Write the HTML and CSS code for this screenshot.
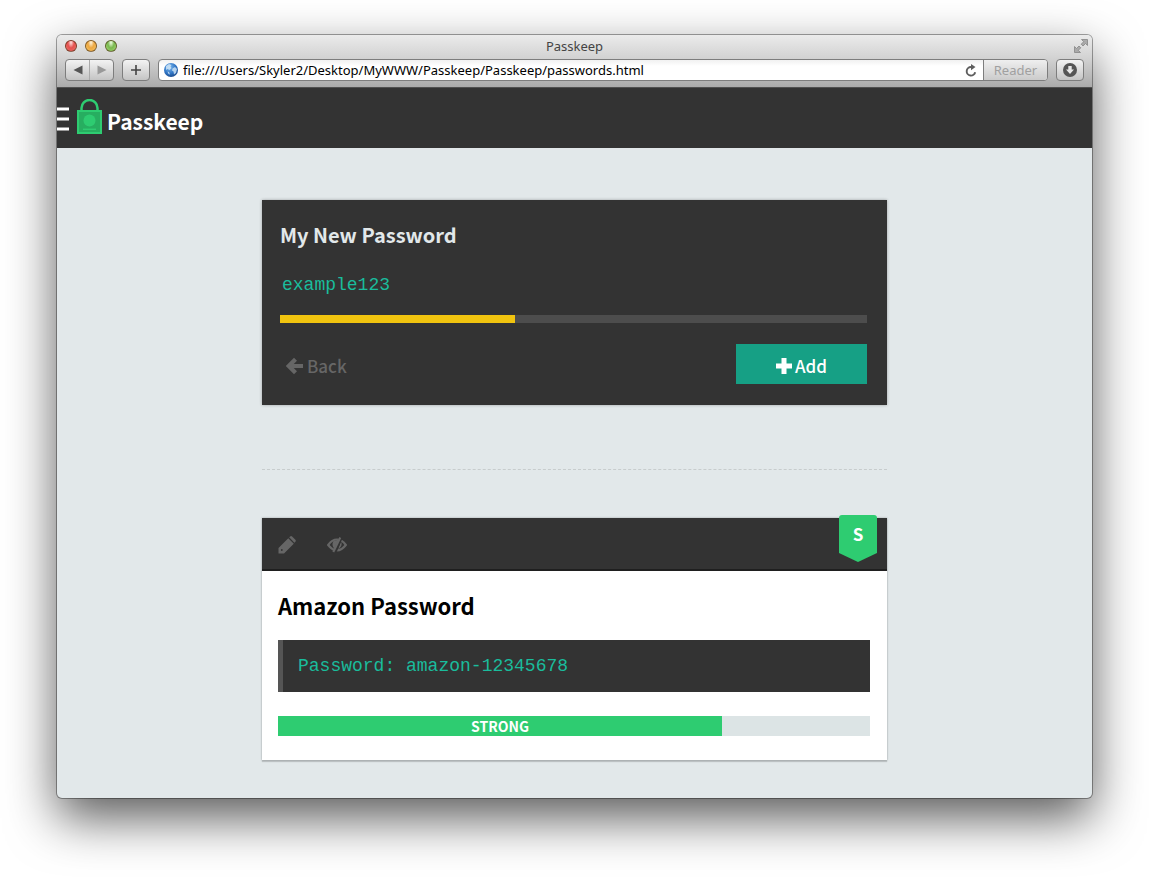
FILE: index.html
```html
<!DOCTYPE html>
<html lang="en">
<head>
<meta charset="utf-8">
<title>Passkeep</title>
<link rel="stylesheet" href="styles.css">
</head>
<body>
<div class="window">
  <div class="chrome">
    <div class="titlebar">
      <div class="lights"><span class="light red"></span><span class="light amber"></span><span class="light green"></span></div>
      <span class="window-title">Passkeep</span>
      <svg class="expand" width="14" height="14" viewBox="0 0 14 14"><path d="M7.500.5h6v6l-2-2-2.500 2.500-1.800-1.800 2.500-2.500zM.5 7.500l2 2L5 7l1.800 1.800-2.500 2.500 2.200 2.200h-6z" fill="#aaa" stroke="#858585" stroke-width=".8"/></svg>
    </div>
    <div class="toolbar">
      <div class="group">
        <button class="seg" aria-label="Previous"><svg width="10" height="10" viewBox="0 0 10 10"><path d="M9.500.5v9L.5 5z" fill="#555"/></svg></button>
        <button class="seg" aria-label="Next"><svg width="10" height="10" viewBox="0 0 10 10"><path d="M.5.5v9L9.500 5z" fill="#999"/></svg></button>
      </div>
      <button class="tool" aria-label="New tab"><svg width="12" height="12" viewBox="0 0 12 12"><path d="M6 1v10M1 6h10" stroke="#444" stroke-width="1.600"/></svg></button>
      <div class="address">
        <svg width="14" height="14" viewBox="0 0 14 14"><defs><radialGradient id="globe" cx=".4" cy=".3" r=".75"><stop offset="0" stop-color="#7db9ee"/><stop offset=".6" stop-color="#2f74c4"/><stop offset="1" stop-color="#194687"/></radialGradient></defs><circle cx="7" cy="7" r="7" fill="url(#globe)"/><path d="M2 3l3-2 2.500 1-1 1.500L7.500 5l-2 2-2-1-1.500 1zM8.500 5.500l2.500-1.500 2 2-1 4-2 1.500-.5-3-1.500-1zM3.500 8.500l1.500.5 1 2.500-1.500-.5z" fill="#d5e8f8" opacity=".8"/></svg>
        <input class="url" type="text" aria-label="Address" value="file:///Users/Skyler2/Desktop/MyWWW/Passkeep/Passkeep/passwords.html">
        <button class="reload" aria-label="Reload"><svg width="12" height="13" viewBox="0 0 12 13"><path d="M6.500 3H6a4.300 4.300 0 1 0 4.200 5.200" fill="none" stroke="#5e5e5e" stroke-width="1.900"/><path d="M6 0v6.200L10.500 3z" fill="#5e5e5e"/></svg></button>
        <button class="reader" disabled>Reader</button>
      </div>
      <button class="tool" aria-label="Downloads"><svg width="14" height="14" viewBox="0 0 14 14"><circle cx="7" cy="7" r="7" fill="#555"/><path d="M5.300 3h3.400v3.500h2.300L7 11 3 6.500h2.300z" fill="#e8e8e8"/></svg></button>
    </div>
  </div>
  <header class="site-header">
    <button class="menu" aria-label="Menu"><svg width="12" height="26" viewBox="0 0 12 26"><path d="M0 4h12M0 14h12M0 24h12" stroke="#fff" stroke-width="3"/></svg></button>
    <a class="brand" href="#">
      <svg width="25" height="38" viewBox="0 0 25 38"><path d="M4.500 12V9a8 8 0 0 1 16 0v3" fill="none" stroke="#2ecc71" stroke-width="2.500"/><path d="M1 12h23v22H1z" fill="#27ae60" stroke="#2ecc71" stroke-width="2"/><circle cx="12.500" cy="21.500" r="6" fill="#2ecc71"/><path d="M6 30.300h13" stroke="#2ecc71" stroke-width="1.500"/></svg>
      <span>Passkeep</span>
    </a>
  </header>
  <main class="page">
    <form class="new-card">
      <h2 class="new-title"><label for="new-password">My New Password</label></h2>
      <input class="new-input" id="new-password" type="text" value="example123">
      <div class="meter"><div class="meter-fill" style="width:40%"></div></div>
      <div class="actions">
        <button class="back" type="button"><svg width="18" height="18" viewBox="0 0 18 18"><path d="M9.500 2.200L2.800 9l6.700 6.800M4 9h13" fill="none" stroke="currentColor" stroke-width="4.200"/></svg>Back</button>
        <button class="add" type="button"><svg width="16" height="16" viewBox="0 0 16 16"><path d="M8 0v16M0 8h16" stroke="#fff" stroke-width="5"/></svg>Add</button>
      </div>
    </form>
    <hr class="divider">
    <article class="entry">
      <div class="entry-bar">
        <button class="icon" aria-label="Edit"><svg width="18" height="18" viewBox="0 0 18 18"><path d="M.5 12L10.300 2.200l5.500 5.500L6 17.500H.5zM11.200 1.300l.9-.9q1-.8 2 0l3.300 3.300q.8 1 0 2l-1 1z" fill="#666"/><circle cx="3.800" cy="14" r=".9" fill="#333"/></svg></button>
        <button class="icon" aria-label="Hide password"><svg width="20" height="16" viewBox="0 0 20 16"><path d="M1.200 8Q5 2.500 10 2.500T18.800 8q-4 5.300-8.800 5.300T1.200 8z" fill="none" stroke="#666" stroke-width="2.200"/><path d="M6.500 4Q4 8 7.500 12L12.500 2.500zM14 4.500q2 4-2 7l-1 .5z" fill="#666"/><path d="M14.300.5L7.800 15.500" stroke="#333" stroke-width="3"/><path d="M13.300.5L6.300 15" stroke="#666" stroke-width="2"/></svg></button>
        <div class="badge"><span>S</span></div>
      </div>
      <div class="entry-body">
        <h2 class="entry-title">Amazon Password</h2>
        <code class="secret">Password: amazon-12345678</code>
        <div class="strength"><div class="strength-fill" style="width:75%">STRONG</div></div>
      </div>
    </article>
  </main>
</div>
</body>
</html>
```
FILE: styles.css
```css
* { box-sizing: border-box; }
body {
  margin: 0;
  min-height: 100vh;
  padding: 35px 57px 79px;
  display: flex;
  background: #fff;
  font-family: "Noto Sans CJK SC", "Noto Sans", sans-serif;
}
button, input { font: inherit; border: 0; padding: 0; margin: 0; background: none; color: inherit; }
button { display: flex; align-items: center; justify-content: center; }
svg { display: block; flex: none; }
h2 { margin: 0; }

.window {
  flex: 1;
  min-width: 0;
  display: flex;
  flex-direction: column;
  border-radius: 5px;
  background: #e2e8ea;
  box-shadow: 0 0 0 1px rgba(0, 0, 0, .35), 0 20px 50px rgba(0, 0, 0, .65);
}
.chrome {
  border-radius: 5px 5px 0 0;
  border-bottom: 1px solid #515151;
  background: linear-gradient(#ebebeb, #d2d2d2 45%, #ababab);
  font-family: "Noto Sans", sans-serif;
}
.titlebar {
  height: 24px;
  padding: 0 4px 2px 8px;
  display: grid;
  grid-template-columns: 1fr auto 1fr;
  align-items: center;
}
.lights { display: flex; gap: 8px; }
.light {
  width: 12px;
  height: 12px;
  border-radius: 50%;
  border: 1px solid rgba(60, 30, 0, .6);
}
.red { background: radial-gradient(ellipse at 50% 15%, #ffe2e2, #e5504e 45%, #e8605c 70%, #ffb0aa); }
.amber { background: radial-gradient(ellipse at 50% 15%, #fff4dd, #eda73f 45%, #f2b653 70%, #ffea9d); }
.green { background: radial-gradient(ellipse at 50% 15%, #f0ffe5, #79b84d 45%, #8fca62 70%, #d3f5a4); }
.window-title { padding-right: 4px; font-size: 13px; line-height: 22px; color: #444; }
.expand { justify-self: end; }
.toolbar { display: flex; gap: 8px; padding: 0 8px 6px; }
.group, .tool {
  height: 22px;
  border: 1px solid #7d7d7d;
  border-radius: 4px;
  background: linear-gradient(#f3f3f3, #c4c4c4);
}
.group { width: 49px; display: flex; }
.seg { flex: 1; }
.seg + .seg { border-left: 1px solid #aaa; }
.tool { width: 28px; }
.address {
  flex: 1;
  min-width: 0;
  height: 22px;
  display: flex;
  align-items: center;
  padding-left: 5px;
  border: 1px solid #7d7d7d;
  border-radius: 4px;
  background: linear-gradient(#f1f1f1, #fff 30%);
}
.url {
  flex: 1;
  min-width: 0;
  height: 20px;
  margin-left: 5px;
  font-size: 13px;
  color: #000;
}
.reload { width: 24px; height: 20px; }
.reader {
  width: 64px;
  height: 20px;
  border-left: 1px solid #7d7d7d;
  border-radius: 0 3px 3px 0;
  background: linear-gradient(#efefef, #cbcbcb);
  font-size: 13px;
  color: #a0a0a0;
}

.site-header {
  height: 60px;
  display: flex;
  align-items: center;
  gap: 8px;
  background: #333;
}
.brand {
  display: flex;
  align-items: center;
  gap: 5px;
  color: #fff;
  text-decoration: none;
  font-size: 21px;
  font-weight: 700;
  line-height: 36px;
}
.brand span { padding-top: 6px; }

.page { width: 100%; max-width: 625px; margin: 0 auto; padding: 52px 0 38px; }
.new-card {
  padding: 17px 20px 21px 18px;
  background: #333;
  box-shadow: 0 0 3px rgba(0, 0, 0, .3);
}
.new-title { font-size: 20px; line-height: 36px; color: #e2e8ea; }
.new-input {
  display: block;
  width: 100%;
  height: 36px;
  margin: 14px 0 12px;
  padding: 0 2px;
  font-family: "Liberation Mono", monospace;
  font-size: 18px;
  color: #1abc9c;
}
.meter { height: 8px; background: #4d4d4d; }
.meter-fill { height: 8px; background: #f1c40f; }
.actions { display: flex; justify-content: space-between; margin-top: 21px; }
.back, .add { height: 40px; gap: 3px; padding-top: 4px; font-size: 17px; line-height: 36px; font-weight: 500; }
.back { padding-left: 6px; color: #666; }
.add { width: 131px; background: #16a085; color: #fff; }
.divider { margin: 64px 0 48px; border: 0; border-top: 1px dashed #c7cccd; }

.entry { background: #fff; box-shadow: 0 2px 1px rgba(0, 0, 0, .15), 0 0 2px rgba(0, 0, 0, .3); }
.entry-bar {
  position: relative;
  height: 53px;
  display: flex;
  align-items: center;
  gap: 31px;
  padding: 3px 16px 0;
  background: #333;
  border-bottom: 2px solid #1f1f1f;
}
.badge {
  position: absolute;
  top: -3px;
  right: 10px;
  width: 38px;
  height: 47px;
  border-radius: 3px 3px 0 0;
  background: #2ecc71;
  clip-path: polygon(0 0, 100% 0, 100% 38px, 50% 100%, 0 38px);
  color: #fff;
  font-size: 17px;
  font-weight: 700;
  line-height: 38px;
  text-align: center;
}
.entry-body { padding: 15px 17px 24px 16px; }
.entry-title { font-size: 22px; line-height: 38px; color: #000; }
.secret {
  display: block;
  margin: 16px 0 24px;
  padding: 0 15px;
  border-left: 5px solid #555;
  background: #333;
  color: #1abc9c;
  font-family: "Liberation Mono", monospace;
  font-size: 18px;
  line-height: 52px;
}
.strength { height: 20px; background: #dce4e5; }
.strength-fill {
  height: 20px;
  background: #2ecc71;
  color: #fff;
  font-size: 14px;
  font-weight: 700;
  line-height: 20px;
  text-align: center;
}
```
